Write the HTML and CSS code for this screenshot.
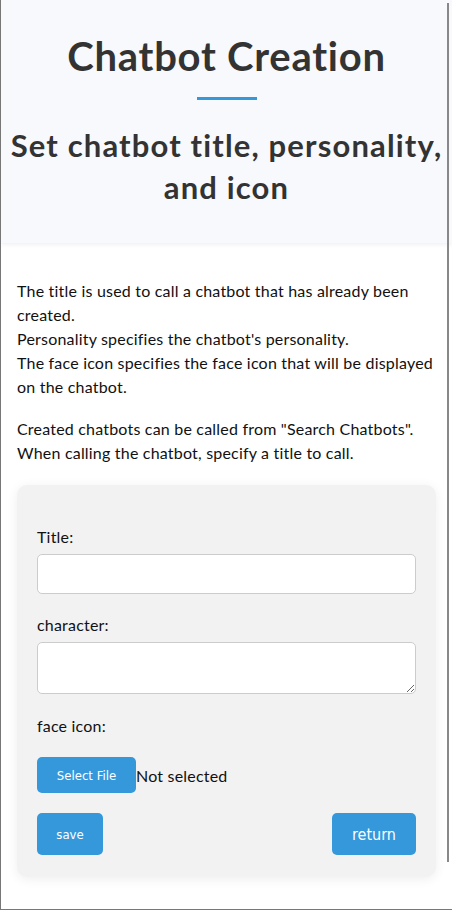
FILE: index.html
```html
<!DOCTYPE html>
<html lang="en">
<head>
<meta charset="utf-8">
<title>Chatbot Creation</title>
<link rel="stylesheet" href="styles.css">
</head>
<body>
<div class="frame">
  <header class="hero">
    <h1 class="hero-title">Chatbot Creation</h1>
    <div class="hero-bar"></div>
    <h2 class="hero-sub">Set chatbot title, personality, and icon</h2>
  </header>
  <main class="content">
    <p class="intro">The title is used to call a chatbot that has already been created.<br>Personality specifies the chatbot's personality.<br>The face icon specifies the face icon that will be displayed on the chatbot.</p>
    <p class="intro intro-second">Created chatbots can be called from "Search Chatbots".<br>When calling the chatbot, specify a title to call.</p>
    <form class="card">
      <label class="field-label" for="title">Title:</label>
      <input class="field-input" id="title" type="text">
      <label class="field-label" for="character">character:</label>
      <textarea class="field-area" id="character"></textarea>
      <span class="field-label">face icon:</span>
      <div class="file-row">
        <button type="button" class="btn btn-file">Select File</button>
        <span class="file-status">Not selected</span>
      </div>
      <div class="actions">
        <button type="button" class="btn btn-save">save</button>
        <button type="button" class="btn btn-return">return</button>
      </div>
    </form>
  </main>
  <div class="scroll-thumb"></div>
</div>
</body>
</html>
```

FILE: styles.css
```css
* { box-sizing: border-box; }
html, body { margin: 0; padding: 0; background: #fff; }
body {
  font-family: "Lato", "Noto Sans", sans-serif;
  color: #222;
  letter-spacing: 0.2px;
}
.frame {
  position: relative;
  width: 452px;
  height: 910px;
  overflow: hidden;
  border-left: 1px solid #777;
  border-bottom: 1px solid #777;
  background: #fff;
}
.hero {
  display: flex;
  flex-direction: column;
  align-items: center;
  background: #f7f9fc;
  padding: 32px 0 35px;
  box-shadow: 0 2px 4px rgba(0, 0, 0, 0.06);
  color: #333;
  text-align: center;
}
.hero-title {
  margin: 0;
  font-size: 40px;
  line-height: 48px;
  font-weight: 700;
  letter-spacing: 0.75px;
}
.hero-bar {
  width: 60px;
  height: 3px;
  background: #3498db;
  margin-top: 17px;
}
.hero-sub {
  margin: 24px 0 0;
  font-size: 31px;
  line-height: 42px;
  font-weight: 700;
  letter-spacing: 1.15px;
}
.content {
  padding: 36px 16px 0;
}
.intro {
  margin: 0;
  font-size: 16px;
  line-height: 24px;
  color: #111;
}
.intro-second { margin-top: 18px; }
.card {
  display: flex;
  flex-direction: column;
  margin-top: 20px;
  background: #f2f2f2;
  border-radius: 10px;
  padding: 40px 20px 22px;
  box-shadow: 0 2px 12px rgba(0, 0, 0, 0.07);
}
.field-label {
  font-size: 16px;
  line-height: 24px;
  color: #111;
}
.field-input {
  margin: 5px 0 19px;
  height: 40px;
  border: 1px solid #ccc;
  border-radius: 5px;
  background: #fff;
  font: inherit;
}
.field-area {
  margin: 5px 0 20px;
  height: 52px;
  border: 1px solid #ccc;
  border-radius: 5px;
  background: #fff;
  font: inherit;
  resize: vertical;
}
.file-row {
  display: flex;
  align-items: center;
  margin-top: 19px;
}
.file-status {
  font-size: 16px;
  color: #111;
}
.btn {
  border: 0;
  border-radius: 5px;
  background: #3498db;
  color: #fff;
  font-family: "DejaVu Sans Condensed", "DejaVu Sans", sans-serif;
  letter-spacing: 0;
  padding: 0;
  cursor: pointer;
}
.btn-file {
  height: 36px;
  width: 99px;
  font-size: 13px;
}
.actions {
  display: flex;
  justify-content: space-between;
  margin-top: 20px;
}
.btn-save {
  height: 42px;
  width: 66px;
  font-size: 13px;
}
.btn-return {
  height: 42px;
  width: 84px;
  font-size: 16px;
}
.scroll-thumb {
  position: absolute;
  top: 3px;
  left: 446px;
  width: 2px;
  height: 859px;
  background: #888;
}
```
